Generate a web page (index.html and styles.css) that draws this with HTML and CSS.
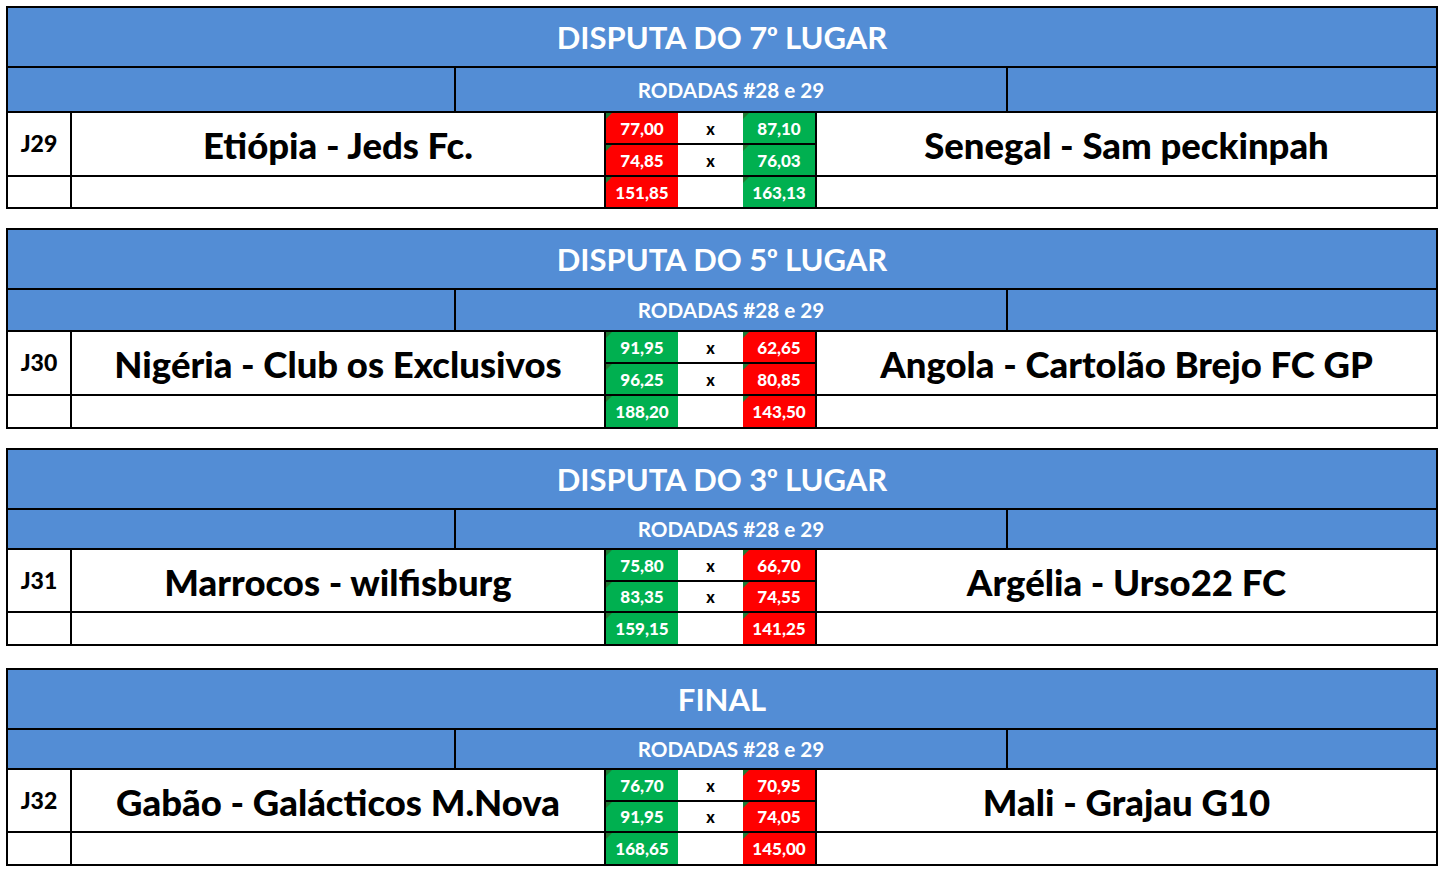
FILE: index.html
```html
<!DOCTYPE html>
<html lang="pt">
<head>
<meta charset="utf-8">
<title>Disputas</title>
<link rel="stylesheet" href="styles.css">
</head>
<body>
<div class="page">

  <section class="block b1">
    <div class="title">DISPUTA DO 7<span class="ord">º</span> LUGAR</div>
    <div class="sub"><div class="sc"></div><div class="sc mid">RODADAS #28 e 29</div><div class="sc last"></div></div>
    <div class="match">
      <div class="jcell">J29</div>
      <div class="team left">Etiópia - Jeds Fc.</div>
      <div class="score red r1">77,00</div><div class="vs r1">x</div><div class="score green r1 rs">87,10</div>
      <div class="team right">Senegal - Sam peckinpah</div>
      <div class="score red r2">74,85</div><div class="vs r2">x</div><div class="score green r2 rs">76,03</div>
      <div class="empty bd"></div><div class="empty bd"></div>
      <div class="score red">151,85</div><div class="vs"></div><div class="score green rs">163,13</div>
      <div class="empty"></div>
    </div>
  </section>

  <section class="block b2">
    <div class="title">DISPUTA DO 5<span class="ord">º</span> LUGAR</div>
    <div class="sub"><div class="sc"></div><div class="sc mid">RODADAS #28 e 29</div><div class="sc last"></div></div>
    <div class="match">
      <div class="jcell">J30</div>
      <div class="team left">Nigéria - Club os Exclusivos</div>
      <div class="score green r1">91,95</div><div class="vs r1">x</div><div class="score red r1 rs">62,65</div>
      <div class="team right">Angola - Cartolão Brejo FC GP</div>
      <div class="score green r2">96,25</div><div class="vs r2">x</div><div class="score red r2 rs">80,85</div>
      <div class="empty bd"></div><div class="empty bd"></div>
      <div class="score green">188,20</div><div class="vs"></div><div class="score red rs">143,50</div>
      <div class="empty"></div>
    </div>
  </section>

  <section class="block b3">
    <div class="title">DISPUTA DO 3<span class="ord">º</span> LUGAR</div>
    <div class="sub"><div class="sc"></div><div class="sc mid">RODADAS #28 e 29</div><div class="sc last"></div></div>
    <div class="match">
      <div class="jcell">J31</div>
      <div class="team left">Marrocos - wilfisburg</div>
      <div class="score green r1">75,80</div><div class="vs r1">x</div><div class="score red r1 rs">66,70</div>
      <div class="team right">Argélia - Urso22 FC</div>
      <div class="score green r2">83,35</div><div class="vs r2">x</div><div class="score red r2 rs">74,55</div>
      <div class="empty bd"></div><div class="empty bd"></div>
      <div class="score green">159,15</div><div class="vs"></div><div class="score red rs">141,25</div>
      <div class="empty"></div>
    </div>
  </section>

  <section class="block b4">
    <div class="title">FINAL</div>
    <div class="sub"><div class="sc"></div><div class="sc mid">RODADAS #28 e 29</div><div class="sc last"></div></div>
    <div class="match">
      <div class="jcell">J32</div>
      <div class="team left">Gabão - Galácticos M.Nova</div>
      <div class="score green r1">76,70</div><div class="vs r1">x</div><div class="score red r1 rs">70,95</div>
      <div class="team right">Mali - Grajau G10</div>
      <div class="score green r2">91,95</div><div class="vs r2">x</div><div class="score red r2 rs">74,05</div>
      <div class="empty bd"></div><div class="empty bd"></div>
      <div class="score green">168,65</div><div class="vs"></div><div class="score red rs">145,00</div>
      <div class="empty"></div>
    </div>
  </section>

</div>
</body>
</html>
```

FILE: styles.css
```css
* { box-sizing: border-box; }
html, body { margin: 0; padding: 0; background: #ffffff; }
body {
  font-family: "Lato", "Liberation Sans", sans-serif;
  font-weight: 700;
  color: #000;
}
.page {
  padding: 6px 0 0 6px;
  display: flex;
  flex-direction: column;
  gap: 19px;
  width: 1438px;
}
.block {
  border: 2px solid #000;
  width: 1432px;
  display: flex;
  flex-direction: column;
}
.b4 { margin-top: 3px; }

.title {
  height: 60px;
  background: #538dd5;
  border-bottom: 2px solid #000;
  color: #fff;
  font-size: 31px;
  display: flex;
  align-items: center;
  justify-content: center;
  white-space: pre;
}
.ord {
  font-family: "Liberation Sans", "DejaVu Sans", sans-serif;
  font-size: 28px;
}
.sub {
  height: 40px;
  display: grid;
  grid-template-columns: 448px 552px 1fr;
  background: #538dd5;
  border-bottom: 2px solid #000;
}
.b1 .sub { height: 45px; }
.b2 .sub { height: 42px; }
.sc {
  border-right: 2px solid #000;
  display: flex;
  align-items: center;
  justify-content: center;
  color: #fff;
  font-size: 20.7px;
}
.sc.last { border-right: none; }

.match {
  display: grid;
  grid-template-columns: 64px 534px 72px 65px 74px 1fr;
  grid-template-rows: 32px 31px 31px;
}
.b1 .match { grid-template-rows: 32px 32px 30px; }
.b2 .match { grid-template-rows: 32px 32px 31px; }

.jcell {
  grid-row: 1 / 3;
  border-right: 2px solid #000;
  border-bottom: 2px solid #000;
  display: flex;
  align-items: center;
  justify-content: center;
  font-size: 23px;
  font-weight: 900;
  padding-bottom: 2px;
}
.team {
  grid-row: 1 / 3;
  border-bottom: 2px solid #000;
  display: flex;
  align-items: center;
  justify-content: center;
  font-size: 36.5px;
  font-weight: 900;
  white-space: nowrap;
  padding-top: 2px;
}
.team.left { grid-column: 2; border-right: 2px solid #000; }
.team.right { grid-column: 6; grid-row: 1 / 3; }
.score {
  position: relative;
  color: #fff;
  font-size: 17px;
  font-weight: 900;
  display: flex;
  align-items: center;
  justify-content: center;
}
.score::before {
  content: "";
  position: absolute;
  left: 0;
  top: 0;
  border-top: 6px solid #1f7a33;
  border-right: 6px solid transparent;
}
.red { background: #ff0000; }
.green { background: #00b050; }
.rs { border-right: 2px solid #000; }
.r1, .r2 { border-bottom: 2px solid #000; }
.vs {
  background: #fff;
  display: flex;
  align-items: center;
  justify-content: center;
  font-size: 16px;
  font-weight: 900;
}
.empty { background: #fff; }
.empty.bd { border-right: 2px solid #000; }
```
